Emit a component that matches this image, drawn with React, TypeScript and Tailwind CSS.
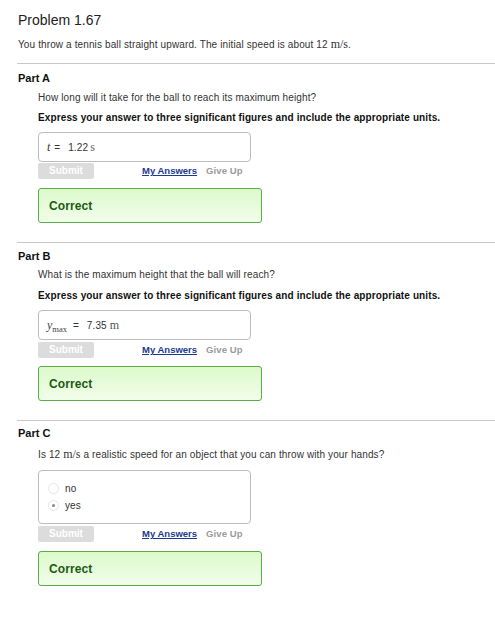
import React from "react";

const sans = { fontFamily: '"Liberation Sans", Arial, sans-serif' };
const serif = '"Liberation Serif", "Times New Roman", serif';

function Actions() {
  return (
    <div className="flex items-center h-[16px]">
      <div className="w-[56px] h-[16px] rounded-[2px] bg-[#dcdcdc] text-white font-bold text-[10px] leading-[16px] text-center">
        Submit
      </div>
      <a className="ml-[48px] text-[9.5px] font-bold text-[#1c3a8e] underline leading-[16px]">My Answers</a>
      <span className="ml-[9px] text-[9.5px] font-bold text-[#9a9a9a] leading-[16px] tracking-[0.1px]">Give Up</span>
    </div>
  );
}

function Correct({ mt }: { mt: string }) {
  return (
    <div
      className={`${mt} w-[224px] h-[35px] rounded-[3px] border border-[#5aae47] bg-gradient-to-b from-[#dcfacb] to-[#f2fdea] flex items-center pl-[10px]`}
    >
      <span className="text-[12px] font-bold text-[#1c5a14] tracking-[0.1px]">Correct</span>
    </div>
  );
}

function Hr({ mt }: { mt: string }) {
  return <div className={`${mt} ml-[17px] h-[1px] bg-[#c8c8c8]`} />;
}

export default function App() {
  return (
    <div className="w-[495px] h-[640px] bg-white text-[#222] overflow-hidden" style={sans}>
      <div className="pl-[18px]">
        <div className="pt-[12px] text-[14px] leading-[16px] text-[#222]">Problem 1.67</div>
        <div className="mt-[9px] text-[10px] leading-[14px] text-[#333] tracking-[0.12px]">
          You throw a tennis ball straight upward. The initial speed is about 12{" "}
          <span style={{ fontFamily: serif }} className="text-[12px] tracking-normal">m/s</span>.
        </div>
      </div>
      <Hr mt="mt-[11px]" />

      {/* Part A */}
      <div className="pl-[18px] mt-[7px] text-[11px] font-bold leading-[14px] text-[#111]">Part A</div>
      <div className="pl-[38px]">
        <div className="mt-[6px] text-[10px] leading-[14px] text-[#333] tracking-[0.12px]">
          How long will it take for the ball to reach its maximum height?
        </div>
        <div className="mt-[6px] text-[10px] leading-[14px] font-bold text-[#111] tracking-[0.12px]">
          Express your answer to three significant figures and include the appropriate units.
        </div>
        <div className="mt-[7px] w-[213px] h-[30px] rounded-[4px] border border-[#bdbdbd] flex items-center pl-[8px] text-[10px] text-[#333]">
          <span style={{ fontFamily: serif }} className="italic text-[12px]">t</span>
          <span className="ml-[4px]">=</span>
          <span className="ml-[8px] tracking-[0.12px]">1.22</span>
          <span style={{ fontFamily: serif }} className="ml-[2px] text-[12px] text-[#666]">s</span>
        </div>
        <div className="mt-[1px]">
          <Actions />
        </div>
        <Correct mt="mt-[9px]" />
      </div>
      <Hr mt="mt-[19px]" />

      {/* Part B */}
      <div className="pl-[18px] mt-[6px] text-[11px] font-bold leading-[14px] text-[#111]">Part B</div>
      <div className="pl-[38px]">
        <div className="mt-[5px] text-[10px] leading-[14px] text-[#333] tracking-[0.12px]">
          What is the maximum height that the ball will reach?
        </div>
        <div className="mt-[7px] text-[10px] leading-[14px] font-bold text-[#111] tracking-[0.12px]">
          Express your answer to three significant figures and include the appropriate units.
        </div>
        <div className="mt-[7px] w-[213px] h-[30px] rounded-[4px] border border-[#bdbdbd] flex items-center pl-[8px] text-[10px] text-[#333]">
          <span style={{ fontFamily: serif }} className="text-[12px] text-[#444]">
            <span className="italic">y</span>
            <span className="text-[8.5px] relative top-[3px]">max</span>
          </span>
          <span className="ml-[6px]">=</span>
          <span className="ml-[8px] tracking-[0.12px]">7.35</span>
          <span style={{ fontFamily: serif }} className="ml-[3px] text-[12px] text-[#555]">m</span>
        </div>
        <div className="mt-[2px]">
          <Actions />
        </div>
        <Correct mt="mt-[8px]" />
      </div>
      <Hr mt="mt-[19px]" />

      {/* Part C */}
      <div className="pl-[18px] mt-[5px] text-[11px] font-bold leading-[14px] text-[#111]">Part C</div>
      <div className="pl-[38px]">
        <div className="mt-[7px] text-[10px] leading-[14px] text-[#333] tracking-[0.12px]">
          Is 12 <span style={{ fontFamily: serif }} className="text-[12px] tracking-normal">m/s</span> a realistic speed
          for an object that you can throw with your hands?
        </div>
        <div className="mt-[8px] w-[213px] h-[54px] rounded-[4px] border border-[#bdbdbd] flex flex-col justify-center pl-[9px] gap-[5px] text-[10px] text-[#333] tracking-[0.12px]">
          <div className="flex items-center h-[12px]">
            <span className="w-[11px] h-[11px] rounded-full border border-[#e6e6e6] bg-white" />
            <span className="ml-[6px]">no</span>
          </div>
          <div className="flex items-center h-[12px]">
            <span className="w-[11px] h-[11px] rounded-full border border-[#e6e6e6] bg-white flex items-center justify-center">
              <span className="w-[3px] h-[3px] rounded-full bg-[#888]" />
            </span>
            <span className="ml-[6px]">yes</span>
          </div>
        </div>
        <div className="mt-[2px]">
          <Actions />
        </div>
        <Correct mt="mt-[9px]" />
      </div>
    </div>
  );
}
